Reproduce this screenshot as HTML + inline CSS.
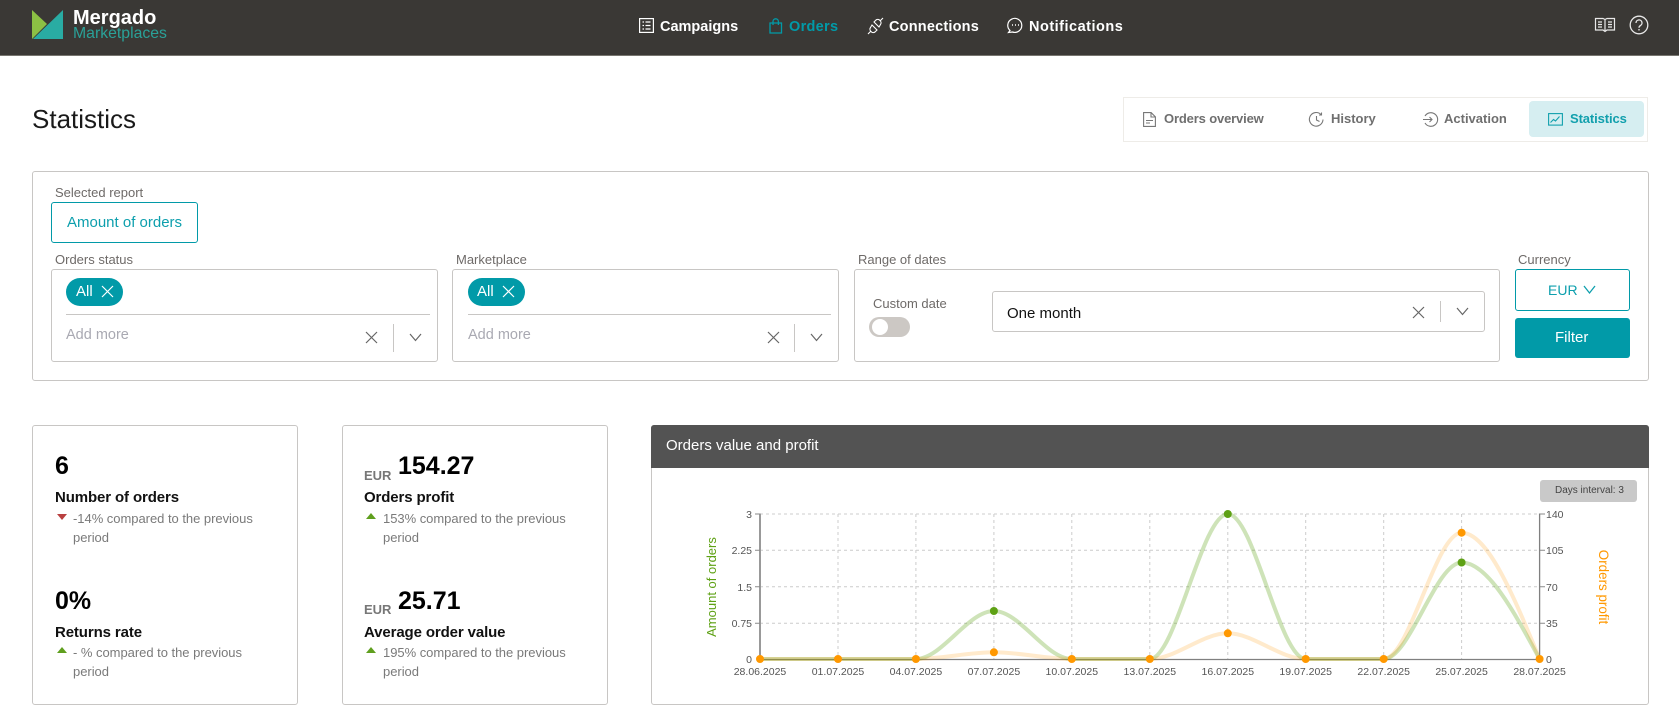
<!DOCTYPE html>
<html lang="en"><head><meta charset="utf-8"><title>Statistics</title>
<style>
*{box-sizing:border-box}
html,body{margin:0;padding:0;background:#fff}
body{position:relative;width:1679px;height:727px;overflow:hidden;font-family:"Liberation Sans",sans-serif;color:#000}
.t{position:absolute;white-space:nowrap;line-height:20px;height:20px}
.b{font-weight:700}
.box{position:absolute;border:1px solid #c8c6c4;border-radius:3px;background:#fff}
.lab{font-size:13px;color:#6e6a68}
.grey{font-size:13px;color:#7a7a7a;letter-spacing:-.03px}
.nav{font-size:14.5px;font-weight:700;color:#fff}
.tab{font-size:13px;font-weight:700;color:#6f6f6f}
svg{position:absolute;overflow:visible;fill:none}
.tri{position:absolute;width:0;height:0;border-left:5.5px solid transparent;border-right:5.5px solid transparent}
.up{border-bottom:6px solid #5f9f1e}
.dn{border-top:6px solid #b94040}
.h{font-size:15px;font-weight:700;color:#111;letter-spacing:-.12px}
.n{font-size:25px;font-weight:700;color:#000}
</style></head><body>

<div style="position:absolute;left:0;top:0;width:1679px;height:56px;background:#3a3835;border-bottom:1px solid #77756f"></div>
<svg style="left:0;top:0" width="70" height="45"><polygon points="32,10 47,24 32,39" fill="#8cc044"/><polygon points="63,10 63,39 33,39" fill="#29aca3"/></svg>
<div class="t b" style="left:73px;top:8px;font-size:20px;color:#fff">Mergado</div>
<div class="t" style="left:73px;top:24px;font-size:15.8px;color:#2aa198">Marketplaces</div>

<svg style="left:639px;top:18px" width="15" height="15" stroke="#fff"><rect x=".6" y=".6" width="13.8" height="13.8" stroke-width="1.2"/><path d="M3.5 4h1.5M6.5 4h5M3.5 7.5h1.5M6.5 7.5h5M3.500 11h1.500M6.500 11h5" stroke-width="1.2"/></svg>
<div class="t nav" style="left:660px;top:17px">Campaigns</div>
<svg style="left:769px;top:18px" width="14" height="16" stroke="#019aa8" stroke-width="1.3"><path d="M1 5h11.500v10H1zM4 7V3.500a2.700 2.700 0 0 1 5.400 0V7"/></svg>
<div class="t nav" style="left:789px;top:17px;color:#019aa8;letter-spacing:.3px">Orders</div>
<svg style="left:867px;top:17px" width="17" height="18" stroke="#fff" stroke-width="1.100"><path d="M1 17l3-3M16 1l-3 3M5 8l5 5-2 2a3 3 0 0 1-4-.5 3 3 0 0 1-.5-4zM12 10L7 5l2-2a3 3 0 0 1 4 .5 3 3 0 0 1 .5 4z"/></svg>
<div class="t nav" style="left:889px;top:17px;letter-spacing:.2px">Connections</div>
<svg style="left:1007px;top:17px" width="17" height="16" stroke="#fff" stroke-width="1.2"><path d="M3 13.500A7 7 0 1 1 5.500 15L1.500 15.500z"/><path d="M5 8h1M8 8h1M11 8h1" stroke-width="1.500"/></svg>
<div class="t nav" style="left:1029px;top:17px;letter-spacing:.5px">Notifications</div>
<svg style="left:1594px;top:17px" width="22" height="16" stroke="#e8e8e8" stroke-width="1.2"><path d="M1.500 1.500h7.500l2 1 2-1h7.500v11.500h-7.500l-2 1.500-2-1.500H1.500zM11 2.500v11M4 5h4M4 7.500h4M4 10h4M14 5h4M14 7.500h4M14 10h4"/></svg>
<svg style="left:1629px;top:15px" width="20" height="20" stroke="#e8e8e8" stroke-width="1.300"><circle cx="10" cy="10" r="8.800"/><path d="M7 8a3 3 0 1 1 4.500 2.500c-1 .6-1.500 1-1.500 2.200M10 14v1.500"/></svg>

<div class="t" style="left:32px;top:107px;height:24px;line-height:24px;font-size:26px;color:#1a1a1a">Statistics</div>

<div style="position:absolute;left:1123px;top:97px;width:525px;height:45px;border:1px solid #eeece8"></div>
<div style="position:absolute;left:1529px;top:101px;width:115px;height:36px;background:#d6eef1;border-radius:4px"></div>
<svg style="left:1143px;top:112px" width="13" height="15" stroke="#777" stroke-width="1.100"><path d="M.6.6h7.500l4.300 4.300v9.500H.6zM8 .6v4.400h4.400M3 8.500h7M3 11h4"/></svg>
<div class="t tab" style="left:1164px;top:109px;letter-spacing:-.15px">Orders overview</div>
<svg style="left:1309px;top:112px" width="15" height="15" stroke="#777" stroke-width="1.100"><path d="M12 2.500A6.800 6.800 0 1 0 14 7.500M7.500 4v4l3 1.500M12.500 .5v2.500H10"/></svg>
<div class="t tab" style="left:1331px;top:109px">History</div>
<svg style="left:1423px;top:112px" width="15" height="15" stroke="#777" stroke-width="1.100"><path d="M2 4A6.800 6.800 0 1 1 2 11M0 7.500h9M6.500 5l2.500 2.500L6.500 10"/></svg>
<div class="t tab" style="left:1444px;top:109px">Activation</div>
<svg style="left:1548px;top:113px" width="15" height="13" stroke="#12a0ad" stroke-width="1.100"><rect x=".6" y=".6" width="13.800" height="11.500"/><path d="M2.500 9.500l3-3 2 1.500 4-4.500"/></svg>
<div class="t tab" style="left:1570px;top:109px;color:#12a0ad;letter-spacing:-.1px">Statistics</div>

<div class="box" style="left:32px;top:171px;width:1617px;height:210px"></div>
<div class="t lab" style="left:55px;top:183px">Selected report</div>
<div class="box" style="left:51px;top:202px;width:147px;height:41px;border-color:#019aa8"></div>
<div class="t" style="left:67px;top:213px;font-size:15px;color:#0d9fad">Amount of orders</div>

<div class="t lab" style="left:55px;top:250px">Orders status</div>
<div class="box" style="left:51px;top:269px;width:387px;height:93px"></div>
<div style="position:absolute;left:66px;top:278px;width:57px;height:28px;border-radius:14px;background:#019aa8"></div>
<div class="t" style="left:76px;top:282px;font-size:15px;color:#fff">All</div>
<svg style="left:101px;top:285px" width="13" height="13" stroke="#fff" stroke-width="1.200"><path d="M1 1l11 11M12 1L1 12"/></svg>
<div style="position:absolute;left:66px;top:314px;width:364px;height:1px;background:#c8c6c4"></div>
<div class="t" style="left:66px;top:325px;font-size:14.5px;color:#a9a9b2">Add more</div>
<svg style="left:365px;top:331px" width="13" height="13" stroke="#666" stroke-width="1.200"><path d="M1 1l11 11M12 1L1 12"/></svg>
<div style="position:absolute;left:393px;top:324px;width:1px;height:28px;background:#c8c6c4"></div>
<svg style="left:409px;top:333px" width="13" height="9" stroke="#666" stroke-width="1.200"><path d="M1 1l5.500 6.500L12 1"/></svg>

<div class="t lab" style="left:456px;top:250px">Marketplace</div>
<div class="box" style="left:452px;top:269px;width:387px;height:93px"></div>
<div style="position:absolute;left:468px;top:278px;width:57px;height:28px;border-radius:14px;background:#019aa8"></div>
<div class="t" style="left:477px;top:282px;font-size:15px;color:#fff">All</div>
<svg style="left:502px;top:285px" width="13" height="13" stroke="#fff" stroke-width="1.200"><path d="M1 1l11 11M12 1L1 12"/></svg>
<div style="position:absolute;left:468px;top:314px;width:363px;height:1px;background:#c8c6c4"></div>
<div class="t" style="left:468px;top:325px;font-size:14.5px;color:#a9a9b2">Add more</div>
<svg style="left:767px;top:331px" width="13" height="13" stroke="#666" stroke-width="1.200"><path d="M1 1l11 11M12 1L1 12"/></svg>
<div style="position:absolute;left:794px;top:324px;width:1px;height:28px;background:#c8c6c4"></div>
<svg style="left:810px;top:333px" width="13" height="9" stroke="#666" stroke-width="1.200"><path d="M1 1l5.500 6.500L12 1"/></svg>

<div class="t lab" style="left:858px;top:250px">Range of dates</div>
<div class="box" style="left:854px;top:269px;width:646px;height:93px"></div>
<div class="t lab" style="left:873px;top:294px">Custom date</div>
<div style="position:absolute;left:869px;top:317px;width:41px;height:20px;border-radius:10px;background:#ccc8c4"></div>
<div style="position:absolute;left:872px;top:319px;width:16px;height:16px;border-radius:8px;background:#fff"></div>
<div class="box" style="left:992px;top:291px;width:493px;height:41px"></div>
<div class="t" style="left:1007px;top:304px;font-size:15px;color:#111">One month</div>
<svg style="left:1412px;top:306px" width="13" height="13" stroke="#666" stroke-width="1.200"><path d="M1 1l11 11M12 1L1 12"/></svg>
<div style="position:absolute;left:1440px;top:301px;width:1px;height:21px;background:#c8c6c4"></div>
<svg style="left:1456px;top:307px" width="13" height="9" stroke="#666" stroke-width="1.200"><path d="M1 1l5.500 6.500L12 1"/></svg>

<div class="t lab" style="left:1518px;top:250px">Currency</div>
<div class="box" style="left:1515px;top:269px;width:115px;height:42px;border-color:#019aa8"></div>
<div class="t" style="left:1548px;top:280px;font-size:14px;color:#0d9fad">EUR</div>
<svg style="left:1583px;top:285px" width="13" height="10" stroke="#0d9fad" stroke-width="1.300"><path d="M1 1l5.500 7L12 1"/></svg>
<div style="position:absolute;left:1515px;top:318px;width:115px;height:40px;background:#019aa8;border-radius:3px"></div>
<div class="t" style="left:1555px;top:328px;font-size:15px;color:#fff">Filter</div>

<div class="box" style="left:32px;top:425px;width:266px;height:280px"></div>
<div class="t n" style="left:55px;top:456px">6</div>
<div class="t h" style="left:55px;top:488px">Number of orders</div>
<div class="tri dn" style="left:57px;top:514px"></div>
<div class="t grey" style="left:73px;top:509px">-14% compared to the previous</div>
<div class="t grey" style="left:73px;top:528px">period</div>
<div class="t n" style="left:55px;top:591px">0%</div>
<div class="t h" style="left:55px;top:623px">Returns rate</div>
<div class="tri up" style="left:57px;top:647px"></div>
<div class="t grey" style="left:73px;top:643px">- % compared to the previous</div>
<div class="t grey" style="left:73px;top:662px">period</div>

<div class="box" style="left:342px;top:425px;width:266px;height:280px"></div>
<div class="t b" style="left:364px;top:466px;font-size:13px;color:#777">EUR</div>
<div class="t n" style="left:398px;top:456px">154.27</div>
<div class="t h" style="left:364px;top:488px">Orders profit</div>
<div class="tri up" style="left:366px;top:513px"></div>
<div class="t grey" style="left:383px;top:509px">153% compared to the previous</div>
<div class="t grey" style="left:383px;top:528px">period</div>
<div class="t b" style="left:364px;top:600px;font-size:13px;color:#777">EUR</div>
<div class="t n" style="left:398px;top:591px">25.71</div>
<div class="t h" style="left:364px;top:623px">Average order value</div>
<div class="tri up" style="left:366px;top:647px"></div>
<div class="t grey" style="left:383px;top:643px">195% compared to the previous</div>
<div class="t grey" style="left:383px;top:662px">period</div>

<div class="box" style="left:651px;top:425px;width:998px;height:280px"></div>
<div style="position:absolute;left:651px;top:425px;width:998px;height:43px;background:#535353;border-radius:3px 3px 0 0"></div>
<div class="t" style="left:666px;top:436px;font-size:15px;color:#fff">Orders value and profit</div>
<div style="position:absolute;left:1540px;top:480px;width:97px;height:22px;background:#c9c9c9;border-radius:3px"></div>
<div class="t" style="left:1555px;top:481px;font-size:10px;color:#444">Days interval: 3</div>

<svg style="left:0;top:0" width="1679" height="727">
<g stroke="#ccc" stroke-width="1" stroke-dasharray="3 3">
<path d="M760 514H1540M760 550.300H1540M760 586.700H1540M760 623.300H1540"/>
<path d="M838 514V659M915.900 514V659M993.900 514V659M1071.800 514V659M1149.800 514V659M1227.800 514V659M1305.700 514V659M1383.700 514V659M1461.600 514V659"/>
</g>
<path d="M760 513.500V659.500" stroke="#999" stroke-width="2"/>
<path d="M760 659.500H1539.600V513.500" stroke="#808080" stroke-width="1.300"/>
<path d="M755 514h5M755 550.300h5M755 586.700h5M755 623.300h5M1540 514h5M1540 550.300h5M1540 586.700h5M1540 623.300h5" stroke="#8a8a8a"/>
<path d="M760 659L915.900 659C941.900 659 967.900 611 993.900 611C1019.900 611 1045.800 659 1071.800 659L1149.800 659C1175.800 659 1201.800 514 1227.800 514C1253.800 514 1279.700 659 1305.700 659L1383.700 659C1409.700 659 1435.600 562.500 1461.600 562.500C1487.600 562.500 1513.600 610.800 1539.600 659" stroke="#5ea114" stroke-opacity=".3" stroke-width="4"/>
<path d="M760 659L915.900 659C941.900 659 967.900 652.300 993.900 652.300C1019.900 652.300 1045.800 659 1071.800 659L1149.800 659C1175.800 659 1201.800 633.300 1227.800 633.300C1253.800 633.300 1279.700 659 1305.700 659L1383.700 659C1409.700 659 1435.600 532.700 1461.600 532.700C1487.600 532.700 1513.600 595.900 1539.600 659" stroke="#ff9800" stroke-opacity=".2" stroke-width="4"/>
<g fill="#5ea114"><circle cx="993.900" cy="611" r="4"/><circle cx="1227.800" cy="514" r="4"/><circle cx="1461.600" cy="562.500" r="4"/></g>
<g fill="#ff9800"><circle cx="760" cy="659" r="4"/><circle cx="838" cy="659" r="4"/><circle cx="915.900" cy="659" r="4"/><circle cx="993.900" cy="652.300" r="4"/><circle cx="1071.800" cy="659" r="4"/><circle cx="1149.800" cy="659" r="4"/><circle cx="1227.800" cy="633.300" r="4"/><circle cx="1305.700" cy="659" r="4"/><circle cx="1383.700" cy="659" r="4"/><circle cx="1461.600" cy="532.700" r="4"/><circle cx="1539.600" cy="659" r="4"/></g>
<g font-family="Liberation Sans, sans-serif" font-size="10.500" fill="#555" stroke="none">
<g text-anchor="end"><text x="752" y="518">3</text><text x="752" y="554">2.25</text><text x="752" y="591">1.5</text><text x="752" y="627">0.75</text><text x="752" y="663">0</text></g>
<text x="1546" y="518">140</text><text x="1546" y="554">105</text><text x="1546" y="591">70</text><text x="1546" y="627">35</text><text x="1546" y="663">0</text>
<g text-anchor="middle"><text x="760" y="675">28.06.2025</text><text x="838" y="675">01.07.2025</text><text x="915.900" y="675">04.07.2025</text><text x="993.900" y="675">07.07.2025</text><text x="1071.800" y="675">10.07.2025</text><text x="1149.800" y="675">13.07.2025</text><text x="1227.800" y="675">16.07.2025</text><text x="1305.700" y="675">19.07.2025</text><text x="1383.700" y="675">22.07.2025</text><text x="1461.600" y="675">25.07.2025</text><text x="1539.600" y="675">28.07.2025</text></g>
</g>
<text transform="translate(716 587) rotate(-90)" text-anchor="middle" font-family="Liberation Sans, sans-serif" font-size="13" fill="#5ea114" stroke="none">Amount of orders</text>
<text transform="translate(1599 587) rotate(90)" text-anchor="middle" font-family="Liberation Sans, sans-serif" font-size="13.400" fill="#ff9800" stroke="none">Orders profit</text>
</svg>
</body></html>
